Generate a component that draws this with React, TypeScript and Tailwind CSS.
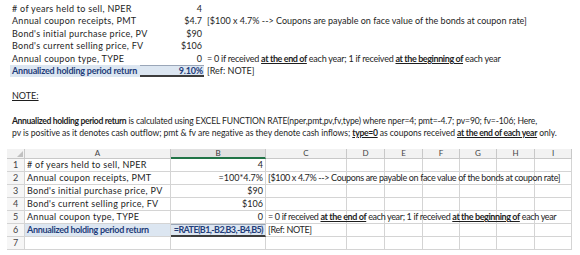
import React from "react";

const U = ({ children, t = "tracking-[-0.4px]" }: { children: React.ReactNode; t?: string }) => (
  <span className={"font-bold underline underline-offset-[1px] " + t}>{children}</span>
);

function TopRow({
  label,
  value,
  comment,
  total,
}: {
  label?: React.ReactNode;
  value?: React.ReactNode;
  comment?: React.ReactNode;
  total?: boolean;
}) {
  return (
    <div className="flex h-[12.4px] items-stretch whitespace-nowrap leading-[12px]">
      <div
        className={
          total
            ? "w-[130px] shrink-0 bg-[#dce6f1] pl-[2px] font-bold tracking-[-0.2px] text-[#1f3d7a]"
            : "w-[130px] shrink-0 pl-[2px] tracking-[0.3px]"
        }
      >
        {label}
      </div>
      <div
        className={
          total
            ? "box-border w-[64px] shrink-0 border-b-2 border-t border-b-[#3d3d3d] border-t-[#9aa6b8] bg-[#dce6f1] pr-[1px] text-right font-bold leading-[10px] tracking-[-0.2px] text-[#1f3d7a]"
            : "w-[64px] shrink-0 pr-[2px] text-right"
        }
      >
        {value}
      </div>
      <div className="shrink-0 pl-[3px]">{comment}</div>
    </div>
  );
}

const COLS = ["A", "B", "C", "D", "E", "F", "G", "H", "I"];

function GridRow({
  n,
  a,
  b,
  c,
  total,
}: {
  n: number;
  a?: React.ReactNode;
  b?: React.ReactNode;
  c?: React.ReactNode;
  total?: boolean;
}) {
  return (
    <>
      <div className="h-[13px] border-b border-r border-[#d4d4d4] bg-[#f6f6f6] text-center text-[#444]">{n}</div>
      <div
        className={
          total
            ? "h-[13px] whitespace-nowrap border-b border-r border-[#d4d4d4] bg-[#dce6f1] pl-[2px] font-bold tracking-[-0.3px] text-[#1f3d7a]"
            : "h-[13px] whitespace-nowrap border-b border-r border-[#d4d4d4] pl-[2px] tracking-[0.3px]"
        }
      >
        {a}
      </div>
      <div
        className={
          total
            ? "box-border h-[13px] whitespace-nowrap border-b-2 border-r border-t border-b-[#3d3d3d] border-r-[#d4d4d4] border-t-[#9aa6b8] bg-[#dce6f1] pr-[2px] text-right font-bold leading-[10px] tracking-[-0.6px] text-[#1f3d7a]"
            : "h-[13px] whitespace-nowrap border-b border-r border-[#d4d4d4] pr-[2px] text-right"
        }
      >
        {b}
      </div>
      <div className="relative h-[13px] border-b border-r border-[#d4d4d4]">
        {c ? (
          <div className="absolute left-[2px] top-0 z-10 whitespace-nowrap tracking-[-0.35px]">{c}</div>
        ) : null}
      </div>
      {[0, 1, 2, 3, 4, 5].map((i) => (
        <div key={i} className="h-[13px] border-b border-r border-[#d4d4d4]" />
      ))}
    </>
  );
}

export default function App() {
  return (
    <div className="h-[255px] w-[580px] overflow-hidden bg-white text-[9px] text-[#1e1e1e] [font-family:Lato,sans-serif]">
      <div className="h-[140px] pl-[10px] pt-[3px]">
        <TopRow label="# of years held to sell, NPER" value="4" />
        <TopRow
          label="Annual coupon receipts, PMT"
          value="$4.7"
          comment="[$100 x 4.7% --> Coupons are payable on face value of the bonds at coupon rate]"
        />
        <TopRow label="Bond's initial purchase price, PV" value="$90" />
        <TopRow label="Bond's current selling price, FV" value="$106" />
        <TopRow
          label="Annual coupon type, TYPE"
          value="0"
          comment={
            <span className="tracking-[-0.25px]">
              = 0 if received <U>at the end of</U> each year; 1 if received <U>at the beginning of</U> each
              year
            </span>
          }
        />
        <TopRow label="Annualized holding period return" value="9.10%" comment="[Ref: NOTE]" total />
        <div className="h-[12.4px]" />
        <div className="h-[12.4px] pl-[2px] leading-[12px]">
          <span className="underline underline-offset-[1px]">NOTE:</span>
        </div>
        <div className="h-[12.4px]" />
        <div className="h-[12.4px] whitespace-nowrap pl-[2px] text-[8.6px] leading-[12px] tracking-[-0.15px]">
          <span className="font-bold tracking-[-0.35px]">Annualized holding period return</span> is calculated
          using EXCEL FUNCTION RATE(nper,pmt,pv,fv,type) where nper=4; pmt=-4.7; pv=90; fv=-106; Here,
        </div>
        <div className="h-[12.4px] whitespace-nowrap pl-[2px] text-[8.6px] leading-[12px] tracking-[-0.05px]">
          pv is positive as it denotes cash outflow; pmt &amp; fv are negative as they denote cash inflows;{" "}
          <U t="tracking-[-0.3px]">type=0</U> as coupons received <U t="tracking-[-0.3px]">at the end of each year</U>{" "}
          only.
        </div>
      </div>

      <div className="ml-[7px] mt-[9px] grid w-[565px] grid-cols-[18px_146px_95px_81px_38px_38px_37px_37px_38px_37px] leading-[12px]">
        <div className="relative h-[10px] border-b border-r border-[#c8c8c8] bg-[#f2f2f2]">
          <div className="absolute bottom-[1px] right-[1px] h-0 w-0 border-b-[6px] border-l-[6px] border-b-[#c0c0c0] border-l-transparent" />
        </div>
        {COLS.map((c) => (
          <div
            key={c}
            className={
              c === "B"
                ? "h-[10px] border-b-2 border-r border-b-[#217346] border-r-[#c8c8c8] bg-[#e1e1e1] text-center text-[8px] leading-[9px] text-[#333]"
                : "h-[10px] border-b border-r border-[#c8c8c8] bg-[#f2f2f2] text-center text-[8px] leading-[9px] text-[#444]"
            }
          >
            {c}
          </div>
        ))}
        <GridRow n={1} a="# of years held to sell, NPER" b="4" />
        <GridRow
          n={2}
          a="Annual coupon receipts, PMT"
          b="=100*4.7%"
          c="[$100 x 4.7% --> Coupons are payable on face value of the bonds at coupon rate]"
        />
        <GridRow n={3} a="Bond's initial purchase price, PV" b="$90" />
        <GridRow n={4} a="Bond's current selling price, FV" b="$106" />
        <GridRow
          n={5}
          a="Annual coupon type, TYPE"
          b="0"
          c={
            <span>
              = 0 if received <U>at the end of</U> each year; 1 if received <U>at the beginning of</U> each year
            </span>
          }
        />
        <GridRow
          n={6}
          a="Annualized holding period return"
          b="=RATE(B1,-B2,B3,-B4,B5)"
          c="[Ref: NOTE]"
          total
        />
        <GridRow n={7} />
      </div>
    </div>
  );
}
